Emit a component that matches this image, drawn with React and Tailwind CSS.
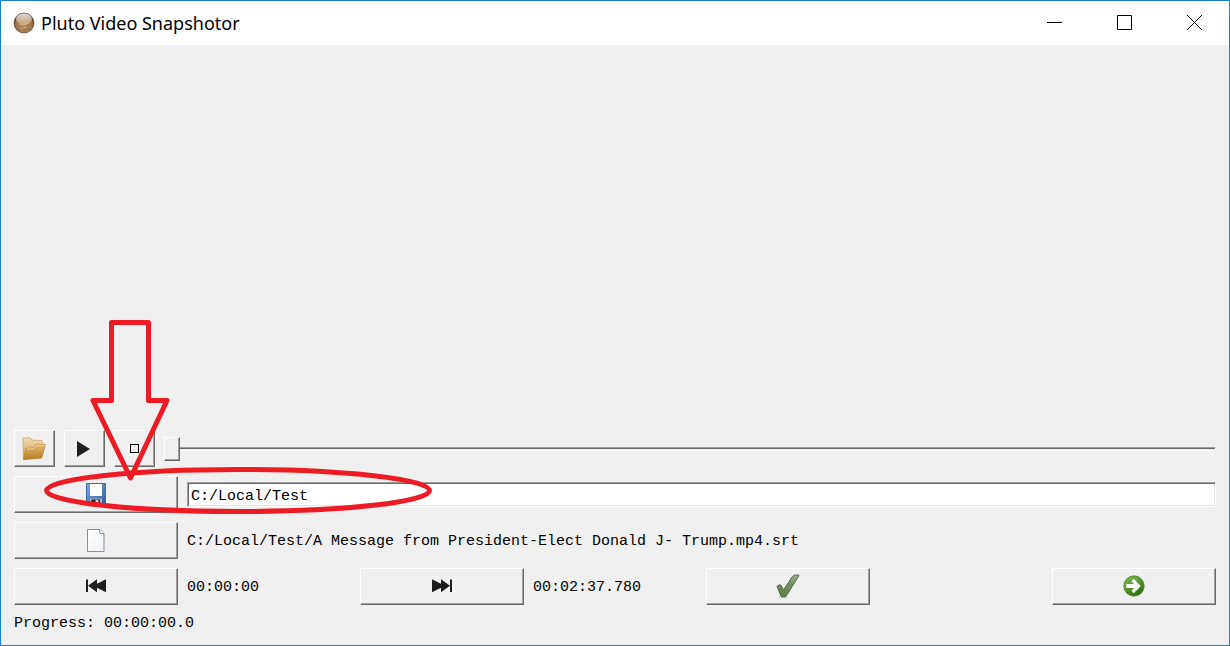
const BEVEL =
  'flex h-[37px] items-center justify-center border border-t-white border-l-white border-r-[#696969] border-b-[#696969] bg-[#f0f0f0] shadow-[inset_-1px_-1px_0_#a0a0a0]';

function AppLogo() {
  return (
    <svg width="22" height="22" viewBox="0 0 22 22" aria-hidden="true">
      <defs>
        <radialGradient id="planet" cx="0.5" cy="0.6" r="0.55">
          <stop offset="0" stopColor="#b98a58" />
          <stop offset="0.7" stopColor="#a0744a" />
          <stop offset="1" stopColor="#4d3a2c" />
        </radialGradient>
        <linearGradient id="planetShine" x1="0" y1="0" x2="0" y2="1">
          <stop offset="0" stopColor="#fff" stopOpacity="0.85" />
          <stop offset="1" stopColor="#f4e6d6" stopOpacity="0.25" />
        </linearGradient>
      </defs>
      <circle cx="11" cy="11" r="10" fill="url(#planet)" stroke="#6b5c50" strokeWidth="0.9" />
      <path d="M6 12.500c2-1 4 1 5.500 0s2.500-.5 4-1M7.500 16c2 .6 4-.9 6-.6" stroke="#d8b48a" strokeWidth="0.9" fill="none" />
      <ellipse cx="11" cy="7" rx="8" ry="5.600" fill="url(#planetShine)" />
    </svg>
  );
}

function FolderIcon() {
  return (
    <svg width="24" height="24" viewBox="0 0 24 24" aria-hidden="true">
      <defs>
        <linearGradient id="folderBack" x1="0" y1="0" x2="0" y2="1">
          <stop offset="0" stopColor="#f0dcb2" />
          <stop offset="1" stopColor="#c99c55" />
        </linearGradient>
        <linearGradient id="folderFront" x1="0" y1="0" x2="0" y2="1">
          <stop offset="0" stopColor="#e3bc72" />
          <stop offset="1" stopColor="#b67a22" />
        </linearGradient>
      </defs>
      <path d="M.9 1.200l7.200-.4 1.700 2.300 9.800.4c.6 0 .9.4.9 1V17L1.400 22z" fill="url(#folderBack)" stroke="#cda869" strokeWidth="0.8" />
      <path d="M1.400 22.700L3.600 11.600l7.600-.8 2.400-2.800 9.700-.7-3 12.500-.9 1.400z" fill="url(#folderFront)" stroke="#b98538" strokeWidth="0.7" />
      <path d="M4.300 12.300l7.200-.8 2.400-2.800 8.500-.6" fill="none" stroke="#f4dca8" strokeWidth="0.8" />
    </svg>
  );
}

function PlayIcon() {
  return (
    <svg width="14" height="16" viewBox="0 0 14 16" aria-hidden="true">
      <path d="M0 0l13 8-13 8z" fill="#202020" />
    </svg>
  );
}

function FloppyIcon() {
  return (
    <svg width="20" height="22" viewBox="0 0 20 22" aria-hidden="true">
      <defs>
        <linearGradient id="disk" x1="0" y1="0" x2="1" y2="1">
          <stop offset="0" stopColor="#82a9d6" />
          <stop offset="1" stopColor="#2f619f" />
        </linearGradient>
      </defs>
      <path d="M.5.5h19v21H2l-1.500-1.500z" fill="url(#disk)" stroke="#376da8" />
      <path d="M4 1h12v12H4z" fill="#fff" />
      <path d="M4 15.500h12V22H4z" fill="#aebac4" />
      <path d="M5.500 16.500H14V22H5.500z" fill="#202124" />
      <path d="M9.500 17h3v5h-3z" fill="#d5d0c4" />
    </svg>
  );
}

function PageIcon() {
  return (
    <svg width="18" height="23" viewBox="0 0 18 23" aria-hidden="true">
      <defs>
        <linearGradient id="paper" x1="0" y1="0" x2="1" y2="1">
          <stop offset="0" stopColor="#fff" />
          <stop offset="1" stopColor="#eef1f5" />
        </linearGradient>
      </defs>
      <path d="M.5.5H13l4 4v18H.5z" fill="url(#paper)" stroke="#8e8e8e" />
      <path d="M12.500.5l.5 4h4" fill="#fff" stroke="#8e8e8e" />
    </svg>
  );
}

function SkipIcon({ back }) {
  return (
    <svg width="20" height="14" viewBox="0 0 20 14" aria-hidden="true">
      {back ? (
        <path d="M0 .5h2V13H0zM2 6.800L11 .3v4.500l9-4.500v13l-9-4.500v4.500z" fill="#1d1d1d" />
      ) : (
        <path d="M20 .5h-2V13h2zM18 6.800L9 .3v4.500L0 .3v13l9-4.500v4.500z" fill="#1d1d1d" />
      )}
    </svg>
  );
}

function CheckIcon() {
  return (
    <svg width="24" height="25" viewBox="0 0 24 25" aria-hidden="true">
      <defs>
        <linearGradient id="tick" x1="1" y1="0" x2="0.2" y2="1">
          <stop offset="0" stopColor="#a3ad97" />
          <stop offset="0.45" stopColor="#749062" />
          <stop offset="1" stopColor="#5f8148" />
        </linearGradient>
      </defs>
      <ellipse cx="7" cy="23.300" rx="5" ry="1.200" fill="#d5d5d5" />
      <path d="M1 12.300l2.500-1.500 1.700.8L7.600 16 16.400 2.400l2-1.200 4.400-.3-.3 1.600L10.200 22l-1.400.9H6.200L4.900 22z" fill="url(#tick)" stroke="#4a6240" strokeWidth="0.9" />
    </svg>
  );
}

function GoIcon() {
  return (
    <svg width="22" height="22" viewBox="0 0 22 22" aria-hidden="true">
      <defs>
        <linearGradient id="go" x1="0.2" y1="0" x2="0.8" y2="1">
          <stop offset="0" stopColor="#7dbb48" />
          <stop offset="1" stopColor="#2c6511" />
        </linearGradient>
      </defs>
      <circle cx="11" cy="11" r="10.200" fill="url(#go)" stroke="#4d8030" strokeWidth="0.8" />
      <path d="M3.300 9h7.600L8.400 6.200l2.400-2.500 6.900 7.300-6.900 7.300-2.400-2.500L10.900 13H3.300z" fill="#fff" />
    </svg>
  );
}

function Annotation() {
  return (
    <svg
      className="pointer-events-none absolute bottom-0 left-0"
      width="440"
      height="330"
      viewBox="1 315 440 330"
      fill="none"
      stroke="#ed1c24"
      strokeWidth="5"
      aria-hidden="true"
    >
      <path d="M111.500 322.500h37v78H167L130.500 478 93 400.500h18.500z" strokeLinejoin="round" />
      <ellipse cx="238" cy="490.500" rx="191.500" ry="21" />
    </svg>
  );
}

function TitleBar() {
  return (
    <header className="flex h-11 items-center justify-between bg-white pb-px pl-3">
      <div className="flex items-center gap-[6px]">
        <AppLogo />
        <h1 className="font-['Noto_Sans',sans-serif] text-[18px] leading-6 text-black">Pluto Video Snapshotor</h1>
      </div>
      <div className="flex h-full">
        <button type="button" aria-label="Minimize" className="flex w-[70px] items-center justify-center">
          <svg width="15" height="15" stroke="#000" aria-hidden="true"><path d="M0 7.500h15" /></svg>
        </button>
        <button type="button" aria-label="Maximize" className="flex w-[70px] items-center justify-center">
          <svg width="15" height="15" stroke="#000" fill="none" aria-hidden="true"><path d="M.5.5h14v14H.5z" /></svg>
        </button>
        <button type="button" aria-label="Close" className="flex w-[70px] items-center justify-center">
          <svg width="15" height="15" stroke="#000" aria-hidden="true"><path d="M0 0l15 15M15 0L0 15" /></svg>
        </button>
      </div>
    </header>
  );
}

export default function App() {
  return (
    <div className="relative flex min-h-screen flex-col border border-[#1a7fd0] bg-[#f0f0f0] font-['Liberation_Mono',monospace] text-[15px] leading-5 text-black">
      <TitleBar />
      <main className="flex flex-1 flex-col gap-[9px] px-[13px] pb-[11px]">
        <section aria-label="Video preview" className="flex-1" />
        <div className="flex items-center gap-[9px]">
          <button type="button" aria-label="Open video" className={`${BEVEL} w-[41px] pr-px`}><FolderIcon /></button>
          <button type="button" aria-label="Play" className={`${BEVEL} w-[41px] pr-px`}><PlayIcon /></button>
          <button type="button" aria-label="Stop" className={`${BEVEL} w-[41px] pr-px`}>
            <span className="size-[9px] border border-black" />
          </button>
          <input
            type="range"
            aria-label="Position"
            defaultValue={0}
            className="h-6 min-w-0 flex-1 appearance-none bg-transparent [&::-webkit-slider-runnable-track]:h-1 [&::-webkit-slider-runnable-track]:border [&::-webkit-slider-runnable-track]:border-t-[#a0a0a0] [&::-webkit-slider-runnable-track]:border-l-[#a0a0a0] [&::-webkit-slider-runnable-track]:border-r-white [&::-webkit-slider-runnable-track]:border-b-white [&::-webkit-slider-runnable-track]:shadow-[inset_0_1px_0_#696969] [&::-webkit-slider-thumb]:-mt-[11px] [&::-webkit-slider-thumb]:-ml-px [&::-webkit-slider-thumb]:h-6 [&::-webkit-slider-thumb]:w-4 [&::-webkit-slider-thumb]:appearance-none [&::-webkit-slider-thumb]:border [&::-webkit-slider-thumb]:border-t-white [&::-webkit-slider-thumb]:border-l-white [&::-webkit-slider-thumb]:border-r-[#696969] [&::-webkit-slider-thumb]:border-b-[#696969] [&::-webkit-slider-thumb]:bg-[#f0f0f0] [&::-webkit-slider-thumb]:shadow-[inset_-1px_-1px_0_#a0a0a0]"
          />
        </div>
        <div className="grid grid-cols-7 items-center gap-[9px]">
          <button type="button" aria-label="Choose output folder" className={`${BEVEL} pb-px`}><FloppyIcon /></button>
          <input
            type="text"
            aria-label="Output folder"
            defaultValue="C:/Local/Test"
            className="col-span-6 h-[25px] w-full border border-t-[#a0a0a0] border-l-[#a0a0a0] border-r-white border-b-white bg-white px-[3px] pt-[3px] shadow-[inset_1px_1px_0_#696969,inset_-1px_-1px_0_#e3e3e3] outline-none"
          />
          <button type="button" aria-label="Choose subtitle file" className={`${BEVEL} pb-px`}><PageIcon /></button>
          <p className="col-span-6 pt-[3px]">C:/Local/Test/A Message from President-Elect Donald J- Trump.mp4.srt</p>
          <button type="button" aria-label="Set start" className={`${BEVEL} pb-px`}><SkipIcon back /></button>
          <span className="pt-[3px]">00:00:00</span>
          <button type="button" aria-label="Set end" className={`${BEVEL} pb-px`}><SkipIcon /></button>
          <span className="pt-[3px]">00:02:37.780</span>
          <button type="button" aria-label="Confirm" className={`${BEVEL} pb-px`}><CheckIcon /></button>
          <button type="button" aria-label="Start" className={`${BEVEL} col-start-7 pb-px`}><GoIcon /></button>
        </div>
        <p>Progress: 00:00:00.0</p>
      </main>
      <Annotation />
    </div>
  );
}
